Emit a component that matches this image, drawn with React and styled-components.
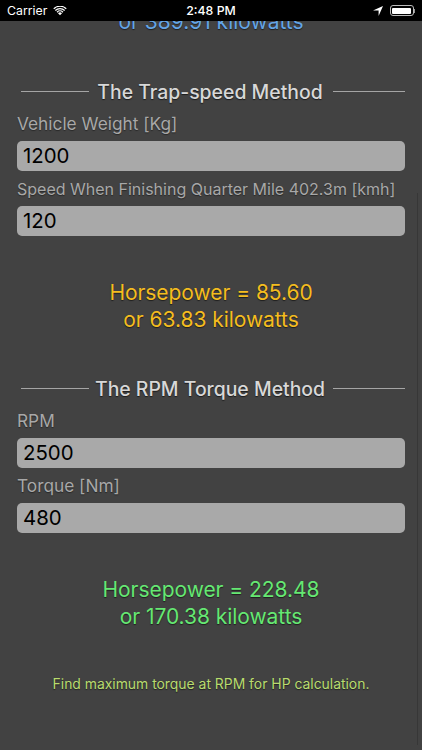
import React from 'react';
import styled, { createGlobalStyle } from 'styled-components';

const GlobalStyle = createGlobalStyle`
  html, body {
    margin: 0;
    padding: 0;
    background: #424242;
  }
  body {
    font-family: Inter, "Liberation Sans", sans-serif;
  }
`;

function App() {
  return (
    <Screen>
      <GlobalStyle />
      <StatusBar>
        <StatusLeft>
          <span>Carrier</span>
          <svg width="14" height="10" viewBox="0 0 16 12">
            <path d="M8 11.2 5.6 8.6a3.4 3.4 0 0 1 4.8 0Z" fill="#fff" />
            <path d="M3.9 6.9a5.8 5.8 0 0 1 8.2 0l-1 1.05a4.4 4.4 0 0 0-6.2 0Z" fill="#fff" />
            <path d="M1.9 4.8a8.7 8.7 0 0 1 12.2 0l-1 1.05a7.3 7.3 0 0 0-10.2 0Z" fill="#fff" />
            <path d="M0 2.8a11.4 11.4 0 0 1 16 0l-1 1.05a10 10 0 0 0-14 0Z" fill="#fff" />
          </svg>
        </StatusLeft>
        <StatusTime>2:48 PM</StatusTime>
        <StatusRight>
          <svg width="10" height="10" viewBox="0 0 10 10">
            <path d="M10 0 5.6 10V4.4H0Z" fill="#fff" />
          </svg>
          <Battery>
            <BatteryFill />
          </Battery>
          <BatteryCap />
        </StatusRight>
      </StatusBar>
      <Content>
        <ScrollIndicator />
        <ClipBox>
          <ClippedResult>or 389.91 kilowatts</ClippedResult>
        </ClipBox>

        <Section>
          <SectionTitle>
            <TitleRule $width={68} />
            <TitleText>The Trap-speed Method</TitleText>
            <TitleRule $width={72} />
          </SectionTitle>
          <Field label="Vehicle Weight [Kg]" value="1200" />
          <Field label="Speed When Finishing Quarter Mile 402.3m [kmh]" value="120" small />
          <Result $color="#f5bd1f">
            <div>Horsepower = 85.60</div>
            <div>or 63.83 kilowatts</div>
          </Result>
        </Section>

        <Section>
          <SectionTitle>
            <TitleRule $width={68} />
            <TitleText>The RPM Torque Method</TitleText>
            <TitleRule $width={72} />
          </SectionTitle>
          <Field label="RPM" value="2500" />
          <Field label="Torque [Nm]" value="480" />
          <Result $color="#66e873">
            <div>Horsepower = 228.48</div>
            <div>or 170.38 kilowatts</div>
          </Result>
        </Section>

        <Hint>Find maximum torque at RPM for HP calculation.</Hint>
      </Content>
    </Screen>
  );
}

function Field({ label, value, small }) {
  return (
    <FieldRow>
      <FieldLabel $small={small}>{label}</FieldLabel>
      <FieldInput>{value}</FieldInput>
    </FieldRow>
  );
}

const Screen = styled.div`
  width: 422px;
  height: 750px;
  display: flex;
  flex-direction: column;
  overflow: hidden;
  background: #424242;
`;

const StatusBar = styled.div`
  height: 21px;
  flex: none;
  display: grid;
  grid-template-columns: 1fr auto 1fr;
  align-items: center;
  padding: 0 7px;
  background: #000;
  color: #fff;
  font-size: 12.3px;
`;

const StatusLeft = styled.div`
  display: flex;
  align-items: center;
  gap: 6px;
`;

const StatusTime = styled.div`
  font-weight: 500;
`;

const StatusRight = styled.div`
  display: flex;
  align-items: center;
  justify-content: flex-end;
`;

const Battery = styled.div`
  width: 24px;
  height: 11px;
  margin-left: 7px;
  padding: 1.5px;
  box-sizing: border-box;
  border: 1px solid #bbb;
  border-radius: 3px;
`;

const BatteryFill = styled.div`
  height: 100%;
  border-radius: 1px;
  background: #fff;
`;

const BatteryCap = styled.div`
  width: 1.5px;
  height: 4px;
  background: #999;
`;

const Content = styled.div`
  flex: 1;
  min-height: 0;
  padding: 0 17px;
  position: relative;
`;

const ScrollIndicator = styled.div`
  position: absolute;
  top: 172px;
  bottom: 5px;
  right: 4px;
  width: 1px;
  background: rgba(0, 0, 0, 0.16);
`;

const ClipBox = styled.div`
  height: 15px;
  overflow: hidden;
`;

const ClippedResult = styled.div`
  margin-top: -13px;
  height: 28px;
  line-height: 28px;
  text-align: center;
  font-size: 21px;
  color: #64a5e6;
  text-shadow: 0 1px 1px rgba(0, 0, 0, 0.55);
`;

const Section = styled.section`
  margin-top: 41px;
`;

const SectionTitle = styled.div`
  display: flex;
  align-items: center;
  padding-left: 4px;
  height: 29px;
`;

const TitleRule = styled.div`
  flex: none;
  width: ${(p) => p.$width}px;
  height: 1px;
  background: #a5a5a5;
`;

const TitleText = styled.div`
  flex: 1;
  margin-left: -2px;
  text-align: center;
  font-size: 19.4px;
  font-weight: 500;
  color: #d8d8d8;
  white-space: nowrap;
  text-shadow: 0 1px 1px rgba(0, 0, 0, 0.6);
`;

const FieldRow = styled.div`
  display: flex;
  flex-direction: column;
`;

const FieldLabel = styled.div`
  height: 24px;
  margin-top: 6px;
  line-height: 24px;
  font-size: ${(p) => (p.$small ? '16px' : '17.3px')};
  color: #a8a8a8;
  white-space: nowrap;
  text-shadow: 0 1px 1px rgba(0, 0, 0, 0.4);
`;

const FieldInput = styled.div`
  height: 30px;
  margin-top: 5px;
  padding: 0 6px;
  line-height: 30px;
  font-size: 20.4px;
  color: #000;
  background: #a9a9a9;
  border-radius: 5px;
`;

const Result = styled.div`
  margin-top: 43px;
  line-height: 27px;
  text-align: center;
  font-size: 21px;
  letter-spacing: -0.05px;
  color: ${(p) => p.$color};
  text-shadow: 0 1px 1px rgba(0, 0, 0, 0.55);
`;

const Hint = styled.div`
  margin-top: 45px;
  text-align: center;
  font-size: 13.9px;
  line-height: 18px;
  color: #b9dc6e;
  text-shadow: 0 1px 1px rgba(0, 0, 0, 0.5);
`;

export default App;
